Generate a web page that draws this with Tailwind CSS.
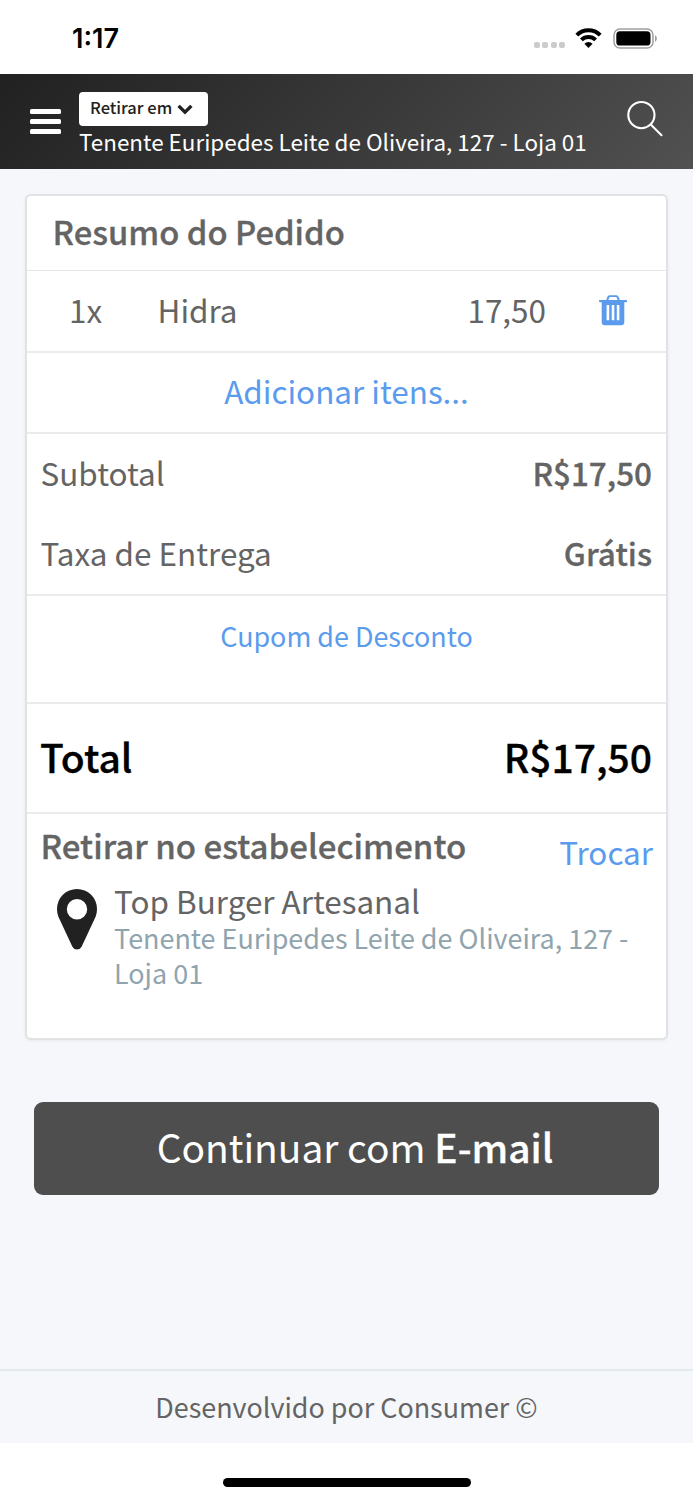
<!DOCTYPE html>
<html lang="pt-BR">
<head>
<meta charset="utf-8">
<title>Resumo do Pedido</title>
<script src="https://cdn.jsdelivr.net/npm/@tailwindcss/browser@4"></script>
</head>
<body class="bg-white">
<div class="flex h-[1500px] w-[693px] flex-col overflow-hidden bg-white font-['Noto_Sans_CJK_JP',sans-serif] text-[31.45px] text-[#646464]">

  <!-- Status bar -->
  <div class="flex h-[74px] shrink-0 items-center justify-between pr-[35px] pl-[72px]">
    <span class="mt-[4px] font-['Inter',sans-serif] text-[27px] leading-8 font-semibold text-black">1:17</span>
    <div class="mt-[2px] flex items-center">
      <div class="mt-[13px] mr-[10px] flex gap-[2.4px]">
        <i class="size-[6px] rounded-[2px] bg-[#cbcbcb]"></i><i class="size-[6px] rounded-[2px] bg-[#cbcbcb]"></i><i class="size-[6px] rounded-[2px] bg-[#cbcbcb]"></i><i class="size-[6px] rounded-[2px] bg-[#cbcbcb]"></i>
      </div>
      <svg class="mr-[11px] h-[20px] w-[27px]" viewBox="0 0 27 20"><g fill="none" stroke="#000" stroke-width="4"><path d="M1.8 7.1a16.6 16.6 0 0 1 23.4 0"/><path d="M6.4 11.8a10.1 10.1 0 0 1 14.2 0"/></g><path d="M13.5 20l-4.1-4.2a5.8 5.8 0 0 1 8.2 0z"/></svg>
      <svg class="h-[21px] w-[45px]" viewBox="0 0 45 21"><rect x="1" y="1" width="39" height="19" rx="6" fill="none" stroke="#a0a0a0" stroke-width="1.5"/><rect x="3.3" y="3.3" width="34.2" height="14.2" rx="3.6"/><path d="M42.2 7.3c2 1 2 5.4 0 6.4z" fill="#8c8c8c"/></svg>
    </div>
  </div>

  <!-- Header -->
  <header class="flex h-[95px] shrink-0 bg-linear-135 from-[#212121] to-[#515151] pl-[30px] text-white">
    <div class="mt-[35px] flex w-[31px] flex-col gap-[5px]">
      <i class="h-[5px] rounded-[1.5px] bg-white"></i><i class="h-[5px] rounded-[1.5px] bg-white"></i><i class="h-[5px] rounded-[1.5px] bg-white"></i>
    </div>
    <div class="ml-[18px] flex flex-col items-start pt-[18px]">
      <div class="flex h-[34px] w-[129px] items-start rounded-[4px] bg-white pl-[11px] text-[#212121]">
        <span class="text-[16.5px] leading-[30px] font-medium whitespace-nowrap">Retirar em</span>
        <svg class="mt-[12px] ml-[4.5px] h-[11px] w-[16px]" viewBox="0 0 16 11" fill="none" stroke="#212121" stroke-width="3.4"><path d="M1.6 1.9L8 8.2l6.4-6.3"/></svg>
      </div>
      <span class="text-[22.45px] leading-[31px] whitespace-nowrap">Tenente Euripedes Leite de Oliveira, 127 - Loja 01</span>
    </div>
    <svg class="mt-[26px] mr-[29px] ml-auto size-[38px]" viewBox="0 0 38 38" fill="none" stroke="#fff" stroke-width="2.1" stroke-linecap="round"><circle cx="15.4" cy="15.1" r="13.1"/><path d="M25 24.8l10.5 10.4"/></svg>
  </header>

  <main class="flex grow flex-col bg-[#f5f7fb]">
    <!-- Order summary -->
    <section class="mx-[25px] mt-[25px] h-[846px] rounded-[6px] border-2 border-[#e1e3e3] bg-white shadow-[0_1px_3px_rgba(0,0,0,0.06)]">
      <h1 class="h-[75px] border-b border-[#e8e8e8] pl-[25.5px] text-[32.8px] leading-[69px] font-medium [-webkit-text-stroke:0.3px]">Resumo do Pedido</h1>

      <div class="flex h-[82px] border-b-2 border-[#ebebeb] pl-[42px] leading-[77px]">
        <span class="w-[88.5px]">1x</span>
        <span>Hidra</span>
        <span class="ml-auto">17,50</span>
        <svg class="mt-[24px] mr-[39.5px] ml-[52.5px] h-[31px] w-[28px]" viewBox="0 0 28 31"><path fill="#5a9bee" fill-rule="evenodd" d="M.6 5H7.200L8.300 1.900Q8.900.2 10.600.2h6.800q1.700 0 2.300 1.700L20.800 5h6.600q.6 0 .6.6v1q0 .6-.6.6H25.300V27q0 3.200-3.200 3.200H5.900Q2.700 30.200 2.700 27V7.200H.6Q0 7.200 0 6.600v-1Q0 5 .6 5zM9.400 5h9.200l-.8-2.300q-.2-.6-.8-.6h-6q-.6 0-.8.6zM7.600 10v15.200h2.600V10zM12.700 10v15.200h2.600V10zM17.800 10v15.200h2.600V10z"/></svg>
      </div>

      <div class="h-[81px] border-b-2 border-[#ebebeb] text-center leading-[75px] text-[#5a9bee]">Adicionar itens...</div>

      <div class="h-[162px] border-b-2 border-[#ebebeb] pr-[14px] pl-[13.5px]">
        <div class="flex justify-between leading-[78px]"><span>Subtotal</span><span class="font-medium [-webkit-text-stroke:0.3px]">R$17,50</span></div>
        <div class="flex justify-between leading-[82px]"><span>Taxa de Entrega</span><span class="font-medium [-webkit-text-stroke:0.3px]">Grátis</span></div>
      </div>

      <div class="h-[108px] border-b-2 border-[#ebebeb] text-center text-[26.9px] leading-[79px] text-[#5a9bee]">Cupom de Desconto</div>

      <div class="flex h-[110px] justify-between border-b-2 border-[#ebebeb] pr-[14px] pl-[13px] text-[39px] leading-[105px] font-medium text-black [-webkit-text-stroke:0.3px]"><span>Total</span><span>R$17,50</span></div>

      <div class="flex justify-between pr-[13px] pl-[13.5px]">
        <h2 class="h-[61px] text-[33px] leading-[63px] font-medium [-webkit-text-stroke:0.3px]">Retirar no estabelecimento</h2>
        <span class="h-[61px] leading-[76px] text-[#5a9bee]">Trocar</span>
      </div>
      <div class="flex pl-[30px]">
        <svg class="mt-[14px] h-[61px] w-[40px] shrink-0" viewBox="0 0 40 61"><path fill="#212121" fill-rule="evenodd" d="M20 0a20 20 0 0 1 20 20q0 3.800-1.300 7.600L24.600 57.700Q23 60.600 20 60.600t-4.600-2.900L1.300 27.600Q0 23.800 0 20A20 20 0 0 1 20 0zM20 10a10.200 10.200 0 1 0 0 20.400a10.200 10.200 0 1 0 0-20.400z"/></svg>
        <div class="ml-[17px] w-[530px] pt-[6px]">
          <div class="h-[39px] leading-[40px]">Top Burger Artesanal</div>
          <div class="text-[26.95px] leading-[35px] text-[#90a4ae]">Tenente Euripedes Leite de Oliveira, 127 - Loja 01</div>
        </div>
      </div>
    </section>

    <button class="mx-[34px] mt-[62px] h-[93px] rounded-[9px] bg-[#4e4e4e] pb-[4px] pl-[17px] text-[38.9px] leading-[89px] text-white">Continuar com <b class="font-medium [-webkit-text-stroke:0.3px]">E-mail</b></button>

    <footer class="mt-auto h-[74px] border-t-2 border-[#e4eaec] text-center text-[26.9px] leading-[71px]">Desenvolvido por Consumer ©</footer>
  </main>

  <!-- Home indicator -->
  <div class="flex h-[57px] shrink-0 justify-center pt-[35px]"><i class="h-[9px] w-[248px] rounded-full bg-black"></i></div>
</div>
</body>
</html>
